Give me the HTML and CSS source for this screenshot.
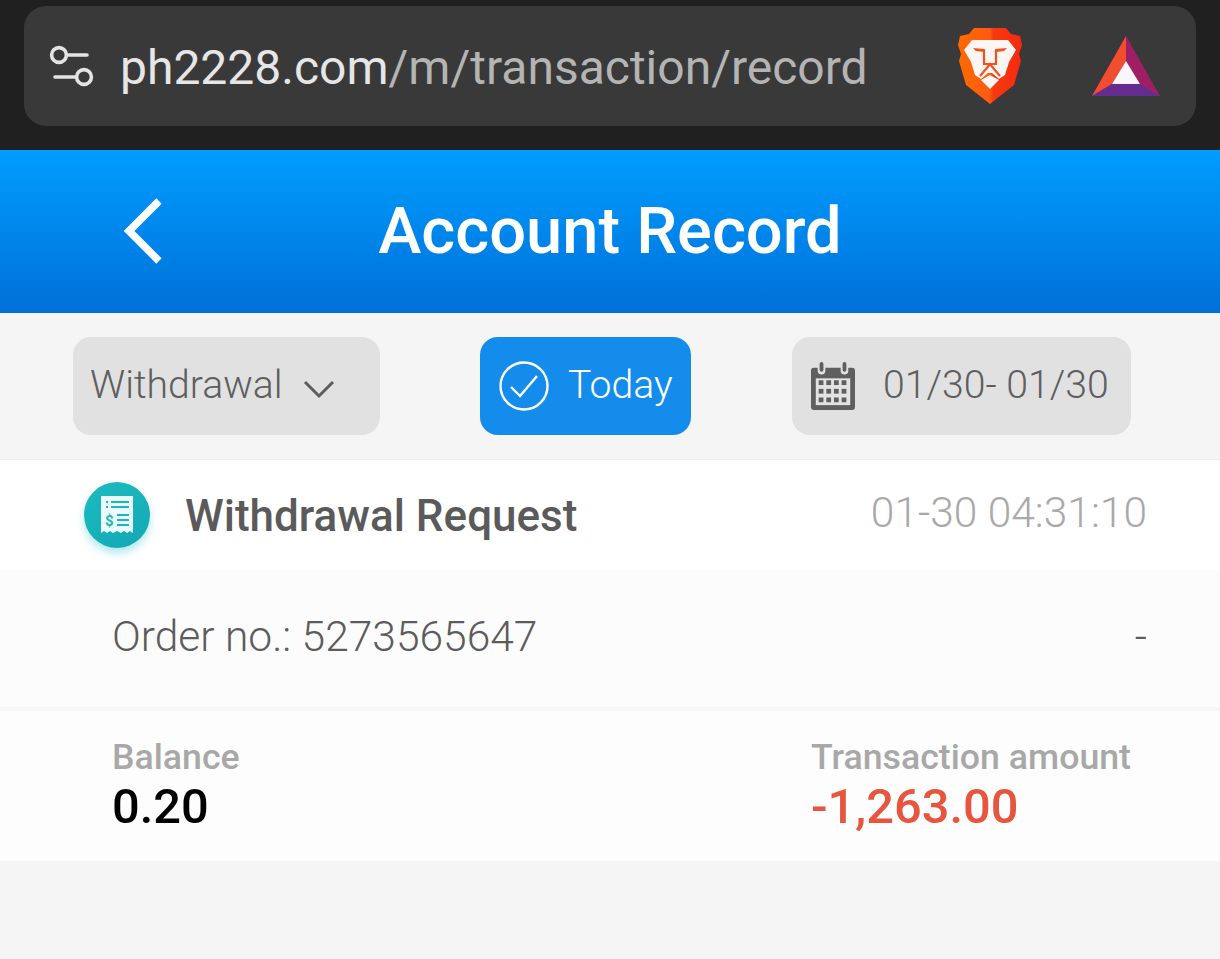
FILE: index.html
```html
<!DOCTYPE html>
<html lang="en">
<head>
<meta charset="utf-8">
<title>Account Record</title>
<link rel="stylesheet" href="styles.css">
</head>
<body>
<div class="chrome">
  <div class="urlbar">
    <svg class="tune" viewBox="0 0 46 46" width="46" height="46" fill="none" stroke="#e4e4e4" stroke-width="3.6" stroke-linecap="round">
      <circle cx="10" cy="10" r="7.4"/><path d="M18 10h20"/>
      <circle cx="35" cy="32" r="7.4"/><path d="M6 32h21"/>
    </svg>
    <div class="url"><span class="host">ph2228.com</span><span class="path">/m/transaction/record</span></div>
    <svg class="brave" viewBox="0 0 66 78" width="66" height="78">
      <defs><linearGradient id="bv" x1="0" x2="1" y1="0" y2="0"><stop offset="0" stop-color="#ff6a00"/><stop offset="0.5" stop-color="#ff5a10"/><stop offset="0.55" stop-color="#f53a10"/><stop offset="1" stop-color="#f52a10"/></linearGradient></defs>
      <path d="M17 0H49L54 6 63 8 65 17 62 26 64 33 57 57 38 72 33 76 28 72 9 57 2 33 4 26 1 17 3 8 12 6Z" fill="url(#bv)"/>
      <path d="M15 12H51L59 22 52 34 48 47 42 51 35 45H31L24 51 18 47 14 34 7 22Z" fill="#fbf6f3"/>
      <path d="M16 20 28 21 27 24 19 23Z M50 20 38 21 39 24 47 23Z" fill="#f2531b"/>
      <path d="M27 22V36H39V22 M23 48 29 41 M43 48 37 41 M29 41 33 36 37 41" fill="none" stroke="#f2531b" stroke-width="2.2"/>
      <path d="M24 52 33 47 42 52 33 61Z" fill="#fbf6f3"/>
    </svg>
    <svg class="bat" viewBox="0 0 68 62" width="68" height="62">
      <path d="M34 0 0 60H68Z" fill="#9e1f63"/>
      <path d="M34 0 0 60 20 48 34 25Z" fill="#f04e2f"/>
      <path d="M0 60 20 48H48L68 60Z" fill="#662d91"/>
      <path d="M34 25 20 48H48Z" fill="#fbf6fb"/>
    </svg>
  </div>
</div>
<header class="head">
  <svg class="back" viewBox="0 0 42 66" width="42" height="66" fill="none" stroke="#fff" stroke-width="7.5"><path d="M37 3 7 33 37 63"/></svg>
  <h1>Account Record</h1>
</header>
<div class="filters">
  <div class="pill select">
    <span>Withdrawal</span>
    <svg viewBox="0 0 34 20" width="34" height="20" fill="none" stroke="#5c5c5c" stroke-width="3"><path d="M3 3 17 17 31 3"/></svg>
  </div>
  <div class="pill today">
    <svg viewBox="0 0 50 50" width="50" height="50" fill="none" stroke="#fff" stroke-width="2.4"><circle cx="25" cy="25" r="23.5"/><path d="M12 26 21 35 38 15"/></svg>
    <span>Today</span>
  </div>
  <div class="pill dates">
    <svg viewBox="0 0 46 50" width="44" height="48">
      <path d="M3 6H7V9A4 4 0 0 0 15 9V6H31V9A4 4 0 0 0 39 9V6H43A3 3 0 0 1 46 9V47A3 3 0 0 1 43 50H3A3 3 0 0 1 0 47V9A3 3 0 0 1 3 6Z" fill="#5f5f5f"/>
      <rect x="9" y="0" width="4" height="10" rx="2" fill="#5f5f5f"/><rect x="33" y="0" width="4" height="10" rx="2" fill="#5f5f5f"/>
      <rect x="5" y="17" width="36" height="28" fill="#e3e3e3"/>
      <g fill="#5f5f5f">
        <rect x="8" y="19" width="5" height="5"/><rect x="16" y="19" width="5" height="5"/><rect x="24" y="19" width="5" height="5"/><rect x="32" y="19" width="5" height="5"/>
        <rect x="8" y="28" width="5" height="5"/><rect x="16" y="28" width="5" height="5"/><rect x="24" y="28" width="5" height="5"/><rect x="32" y="28" width="5" height="5"/>
        <rect x="8" y="37" width="5" height="5"/><rect x="16" y="37" width="5" height="5"/><rect x="24" y="37" width="5" height="5"/><rect x="32" y="37" width="5" height="5"/>
      </g>
    </svg>
    <span>01/30- 01/30</span>
  </div>
</div>
<section class="record">
  <div class="rowtitle">
    <div class="badge">
      <svg viewBox="0 0 32 38" width="32" height="38">
        <path d="M0 0H32V37L29 35 26 37 23 35 20 37 16 35 12 37 9 35 6 37 3 35 0 37Z" fill="#e9fbfa"/>
        <g fill="#1fb5bd">
          <rect x="5" y="5" width="2" height="2"/><rect x="5" y="10" width="2" height="2"/>
          <rect x="10" y="5" width="18" height="2"/><rect x="10" y="10" width="18" height="2"/>
          <rect x="16" y="18" width="12" height="2"/><rect x="16" y="23" width="12" height="2"/><rect x="16" y="28" width="12" height="2"/>
          <text x="4" y="30" class="dollar">$</text>
        </g>
      </svg>
    </div>
    <div class="rtitle">Withdrawal Request</div>
    <div class="rtime">01-30 04:31:10</div>
  </div>
  <div class="roworder">
    <span>Order no.: 5273565647</span><span>-</span>
  </div>
  <div class="rowamounts">
    <div class="amt amt-balance">
      <div class="lbl">Balance</div>
      <div class="val">0.20</div>
    </div>
    <div class="amt amt-trans">
      <div class="lbl">Transaction amount</div>
      <div class="val neg">-1,263.00</div>
    </div>
  </div>
</section>
</body>
</html>
```
FILE: styles.css
```css
* { box-sizing: border-box; }
html, body { margin: 0; padding: 0; }
body { width: 1220px; height: 959px; overflow: hidden; background: #f5f5f5; font-family: Roboto, "Liberation Sans", sans-serif; }

.chrome { height: 150px; background: #202020; padding: 6px 24px 24px; }
.urlbar { height: 120px; border-radius: 22px; background: #393939; display: flex; align-items: center; padding: 0 36px 0 25px; }
.tune { flex: none; margin-top: 4px; }
.url { flex: 1; margin-left: 25px; margin-top: 3px; font-size: 48px; white-space: nowrap; line-height: 1; }
.host { color: #e6e6e6; }
.path { color: #b4b4b4; }
.brave { flex: none; margin-right: 69px; margin-top: 1px; }
.bat { flex: none; margin-top: 2px; }

.head { height: 163px; background: linear-gradient(#009dff, #0070d8); display: flex; align-items: center; justify-content: center; position: relative; }
.head h1 { margin: 0 0 1px; font-size: 65px; font-weight: 500; color: #fff; line-height: 1; }
.back { position: absolute; left: 122px; top: 48px; }

.filters { height: 146px; padding: 24px 89px 24px 73px; display: flex; gap: 100px; }
.pill { height: 98px; border-radius: 18px; background: #e1e1e1; display: flex; align-items: center; color: #5e5e5e; font-size: 39.2px; font-weight: 300; white-space: nowrap; }
.pill span { margin-top: -2px; }
.select { width: 307px; padding-left: 17px; gap: 19px; }
.select svg { margin-top: 5px; }
.today { width: 211px; background: #148ceb; color: #fff; padding-left: 19px; gap: 19px; }
.dates { width: 339px; padding-left: 19px; gap: 28px; margin-left: 1px; }

.record { background: #fdfdfd; }
.rowtitle { height: 111px; background: #fff; border-top: 1px solid #efefef; display: flex; align-items: center; padding: 0 73px 2px 84px; }
.badge { width: 66px; height: 66px; border-radius: 50%; background: linear-gradient(150deg, #1cbcc0, #13a7b5); box-shadow: 0 5px 8px rgba(25, 190, 195, .35); display: flex; align-items: center; justify-content: center; margin-top: 2px; }
.dollar { font-size: 15px; font-weight: 700; fill: #1fb5bd; }
.rtitle { margin-left: 35px; margin-top: 3px; flex: 1; font-size: 44px; font-weight: 500; color: #5a5a5a; }
.rtime { margin-top: -3px; font-size: 42.5px; font-weight: 300; color: #a9a9a9; }
.roworder { height: 137px; background: #fcfcfc; display: flex; align-items: center; justify-content: space-between; padding: 0 73px 4px 112px; font-size: 42.5px; font-weight: 300; color: #5c5c5c; }
.rowamounts { height: 154px; border-top: 4px solid #f6f6f6; background: #fdfdfd; display: flex; justify-content: space-between; padding: 26px 89px 0 112px; }
.lbl { font-size: 35.7px; font-weight: 500; color: #a8a8a8; line-height: 40px; }
.val { font-size: 48.8px; font-weight: 500; color: #000; line-height: 52px; margin-top: 4px; }
.neg { color: #e8553e; }
```
